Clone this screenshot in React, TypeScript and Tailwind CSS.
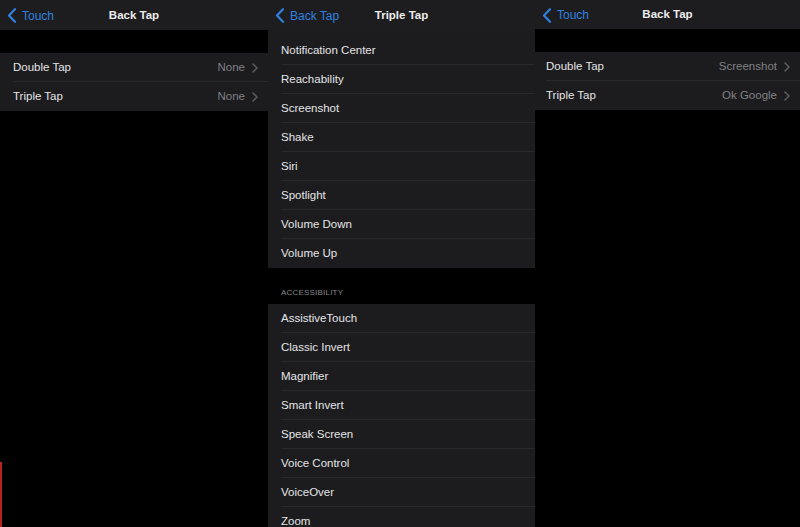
// Three iOS "Back Tap" settings screens shown side by side in dark mode.

const font = { fontFamily: '"Liberation Sans", Arial, sans-serif' }

function BackChevron() {
  return (
    <svg width="10" height="15" viewBox="0 0 10 15" className="shrink-0">
      <path d="M8 1.2 L2 7.5 L8 13.8" fill="none" stroke="#2f81e0" strokeWidth="2.2" strokeLinecap="round" strokeLinejoin="round" />
    </svg>
  )
}

function RowChevron() {
  return (
    <svg width="6" height="10" viewBox="0 0 6 10" className="shrink-0">
      <path d="M1 1 L5 5 L1 9" fill="none" stroke="#5e5e63" strokeWidth="1.5" strokeLinecap="round" strokeLinejoin="round" />
    </svg>
  )
}

function Header({ back, title, tall = true }: { back: string; title: string; tall?: boolean }) {
  return (
    <div className={`relative flex items-center bg-[#1d1d1f] px-[7px] pt-[1px] ${tall ? 'h-[30px]' : 'h-[29px]'}`}>
      <div className="flex items-center gap-[5px] text-[12px] text-[#2f81e0]">
        <BackChevron />
        <span>{back}</span>
      </div>
      <div className="absolute inset-x-0 text-center text-[11.5px] font-bold text-[#ececec]">{title}</div>
    </div>
  )
}

function Row({ label, value, last, inset = 'pl-[13px]' }: { label: string; value?: string; last?: boolean; inset?: string }) {
  return (
    <div className={`bg-[#1c1c1e] ${inset}`}>
      <div className={`flex h-[29px] items-center pt-[1px] pr-[10px] ${last ? '' : 'border-b border-[#2a2a2d]'}`}>
        <span className="flex-1 text-[11.5px] text-[#e4e4e6]">{label}</span>
        {value !== undefined && (
          <span className="flex items-center gap-[7px] text-[11.5px] text-[#808085]">
            {value}
            <RowChevron />
          </span>
        )}
      </div>
    </div>
  )
}

const system = ['Notification Center', 'Reachability', 'Screenshot', 'Shake', 'Siri', 'Spotlight', 'Volume Down', 'Volume Up']
const accessibility = ['AssistiveTouch', 'Classic Invert', 'Magnifier', 'Smart Invert', 'Speak Screen', 'Voice Control', 'VoiceOver', 'Zoom']

export default function App() {
  return (
    <div className="flex h-[527px] w-[800px] overflow-hidden bg-black" style={font}>
      <div className="relative w-[268px] shrink-0">
        <Header back="Touch" title="Back Tap" />
        <div className="mt-[23px]">
          <Row label="Double Tap" value="None" />
          <Row label="Triple Tap" value="None" last />
        </div>
        <div className="absolute bottom-0 left-0 h-[65px] w-[2px] bg-[#b3241f]" />
      </div>

      <div className="w-[267px] shrink-0">
        <Header back="Back Tap" title="Triple Tap" />
        <div className="h-[6px] bg-[#1c1c1e]" />
        {system.map((s, i) => (
          <Row key={s} label={s} last={i === system.length - 1} />
        ))}
        <div className="flex h-[36px] items-end pb-[5px] pl-[13px] text-[8px] tracking-wide text-[#86868b]">ACCESSIBILITY</div>
        {accessibility.map((s) => (
          <Row key={s} label={s} />
        ))}
      </div>

      <div className="flex-1">
        <Header back="Touch" title="Back Tap" tall={false} />
        <div className="mt-[23px]">
          <Row label="Double Tap" value="Screenshot" inset="pl-[11px]" />
          <Row label="Triple Tap" value="Ok Google" inset="pl-[11px]" last />
        </div>
      </div>
    </div>
  )
}
